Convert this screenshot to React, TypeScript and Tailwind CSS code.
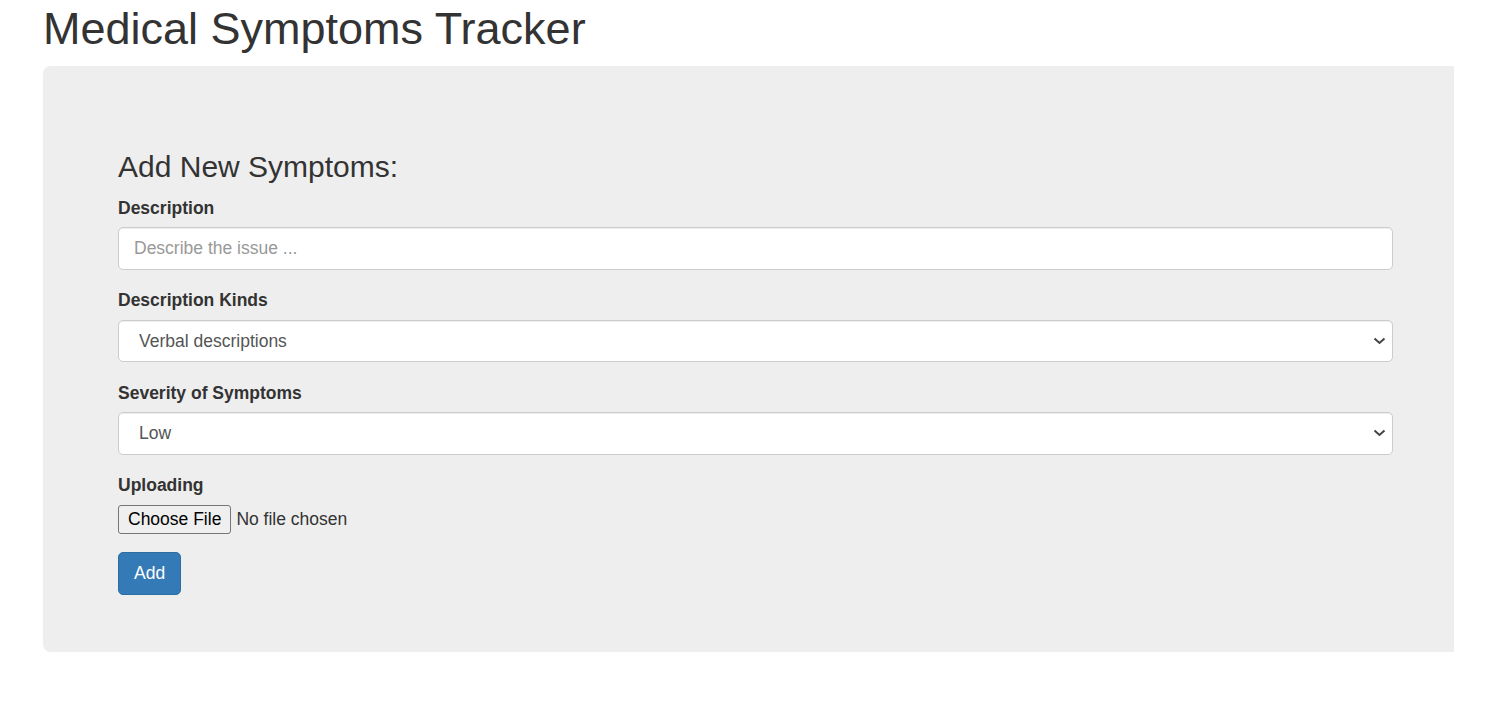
import { useState } from 'react'

const kindOptions = ['Verbal descriptions', 'Photos', 'Measurements']
const severityOptions = ['Low', 'Medium', 'High']

function Chevron() {
  return (
    <svg
      className="pointer-events-none absolute right-[7px] top-1/2 -translate-y-1/2"
      width="13"
      height="8"
      viewBox="0 0 13 8"
      fill="none"
    >
      <polyline points="1.5,1.5 6.5,6 11.5,1.5" stroke="#444" strokeWidth="2" />
    </svg>
  )
}

function SelectField({ label, options }: { label: string; options: string[] }) {
  const [value, setValue] = useState(options[0])
  return (
    <div className="mb-[18.75px]">
      <label className="mb-[6.25px] block font-bold">{label}</label>
      <div className="relative">
        <select
          value={value}
          onChange={(e) => setValue(e.target.value)}
          className="block h-[42.5px] w-full appearance-none rounded-[5px] border border-[#ccc] bg-white pb-[1px] pl-[20px] pr-[30px] pt-[2px] text-[#555] shadow-[inset_0_1px_1px_rgba(0,0,0,0.075)] outline-none"
        >
          {options.map((o) => (
            <option key={o}>{o}</option>
          ))}
        </select>
        <Chevron />
      </div>
    </div>
  )
}

export default function App() {
  return (
    <div className="min-h-screen bg-white font-['Liberation_Sans',Arial,sans-serif] text-[17.5px] leading-[25px] text-[#333]">
      <div className="w-[1454px] pl-[43px]">
        <h1 className="mb-[12.5px] pt-[4px] text-[45px] leading-[49.5px] font-normal">Medical Symptoms Tracker</h1>

        {/* Jumbotron */}
        <div className="rounded-l-[7.5px] bg-[#eee] pb-[57.25px] pl-[75px] pr-[61px] pt-[84.25px]">
          <h3 className="mb-[12.5px] text-[30px] leading-[33px] font-normal">Add New Symptoms:</h3>

          <div className="mb-[18.75px]">
            <label className="mb-[6.25px] block font-bold">Description</label>
            <input
              type="text"
              placeholder="Describe the issue ..."
              className="block h-[42.5px] w-full rounded-[5px] border border-[#ccc] bg-white px-[15px] text-[#555] shadow-[inset_0_1px_1px_rgba(0,0,0,0.075)] outline-none placeholder:text-[#999]"
            />
          </div>

          <SelectField label="Description Kinds" options={kindOptions} />
          <SelectField label="Severity of Symptoms" options={severityOptions} />

          <div className="mb-[18.75px]">
            <label className="mb-[6.25px] block font-bold">Uploading</label>
            <div className="flex h-[29px] items-center">
              <button
                type="button"
                className="h-[29px] rounded-[3px] border border-[#767676] bg-[#efefef] px-[9px] leading-[26px] text-black"
              >
                Choose File
              </button>
              <span className="ml-[5px] leading-[27px]">No file chosen</span>
            </div>
          </div>

          <button
            type="button"
            className="h-[42.5px] rounded-[5px] border border-[#2e6da4] bg-[#337ab7] px-[15px] text-white"
          >
            Add
          </button>
        </div>
      </div>
    </div>
  )
}
